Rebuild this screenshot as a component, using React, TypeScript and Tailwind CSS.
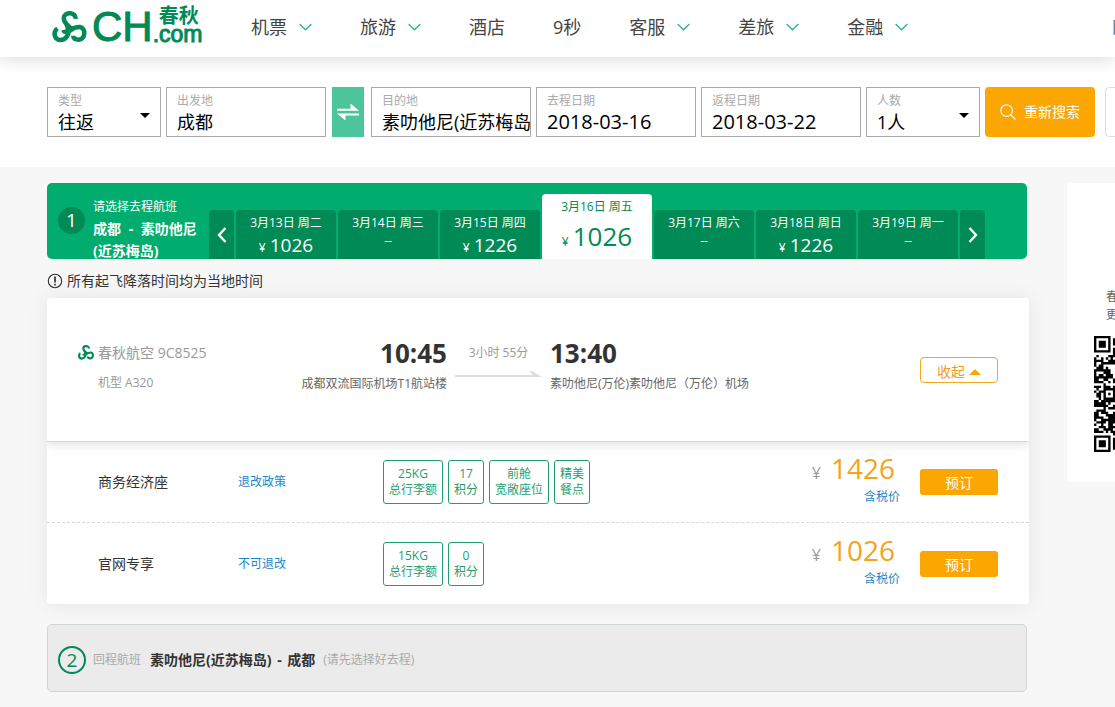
// src/App.tsx
import type { ReactNode } from "react";

type NavItem = { label: string; menu: boolean };
type DayTab = { date: string; price?: string; active?: boolean };
type Fare = { name: string; policy: string; tags: string[][]; price: string };

const NAV: NavItem[] = [
  { label: "机票", menu: true },
  { label: "旅游", menu: true },
  { label: "酒店", menu: false },
  { label: "9秒", menu: false },
  { label: "客服", menu: true },
  { label: "差旅", menu: true },
  { label: "金融", menu: true },
];

const DAYS: DayTab[] = [
  { date: "3月13日 周二", price: "1026" },
  { date: "3月14日 周三" },
  { date: "3月15日 周四", price: "1226" },
  { date: "3月16日 周五", price: "1026", active: true },
  { date: "3月17日 周六" },
  { date: "3月18日 周日", price: "1226" },
  { date: "3月19日 周一" },
];

const FARES: Fare[] = [
  {
    name: "商务经济座",
    policy: "退改政策",
    tags: [
      ["25KG", "总行李额"],
      ["17", "积分"],
      ["前舱", "宽敞座位"],
      ["精美", "餐点"],
    ],
    price: "1426",
  },
  {
    name: "官网专享",
    policy: "不可退改",
    tags: [
      ["15KG", "总行李额"],
      ["0", "积分"],
    ],
    price: "1026",
  },
];

function SpringMark({ className }: { className: string }) {
  return (
    <svg viewBox="0 0 105 98" className={className} fill="none" stroke="#008a55" strokeWidth="14" aria-hidden="true">
      {/* top, right and left lobes */}
      <path d="M71 24 C73 2 36 1 35 22 C35 38 49 38 48 54 C47 66 36 66 34 58" />
      <path d="M48 50 C54 60 70 48 84 49 C104 52 101 86 82 88 C70 88 64 84 64 76" />
      <path d="M50 52 C52 72 42 89 24 89 C4 87 2 62 16 54" />
      <path d="M34 34 L52 38 L70 58 L48 72 Z" fill="#008a55" stroke="none" />
    </svg>
  );
}

function Logo() {
  return (
    <a href="#" className="flex items-center text-[#008a55]">
      <SpringMark className="h-8 w-[35px]" />
      <span className="ml-[5px] font-['Liberation_Sans'] text-[42px] leading-[42px] [-webkit-text-stroke:1px]">CH</span>
      <span className="flex flex-col pb-1">
        <span className="pl-1.5 text-[20px] leading-[18px] font-bold">春秋</span>
        <span className="font-['Liberation_Sans'] text-[23px] leading-[18px] [-webkit-text-stroke:1px]">.com</span>
      </span>
    </a>
  );
}

function Chevron() {
  return (
    <svg viewBox="0 0 14 8" className="h-2 w-[13px]" fill="none" stroke="#2bb585" strokeWidth="1.4" aria-hidden="true">
      <path d="M0.7 0.7 L7 7 L13.3 0.7" />
    </svg>
  );
}

function Field({
  id,
  label,
  className,
  children,
}: {
  id: string;
  label: string;
  className: string;
  children: ReactNode;
}) {
  return (
    <div className={`relative h-[50px] shrink-0 overflow-hidden border border-[#aaa] bg-white pl-2.5 ${className}`}>
      <label htmlFor={id} className="block pt-1 text-xs leading-[18px] text-[#aaa]">
        {label}
      </label>
      {children}
    </div>
  );
}

function SelectField({ id, label, value }: { id: string; label: string; value: string }) {
  return (
    <Field id={id} label={label} className="w-[114px]">
      <select
        id={id}
        defaultValue={value}
        className="block h-6 w-full appearance-none bg-transparent text-lg leading-6 text-black outline-none"
      >
        <option>{value}</option>
      </select>
      <svg viewBox="0 0 10 5" className="pointer-events-none absolute top-[25px] right-2.5 h-[5px] w-2.5" aria-hidden="true">
        <path d="M0 0 H10 L5 5 Z" />
      </svg>
    </Field>
  );
}

function TextField({ id, label, value, size }: { id: string; label: string; value: string; size: string }) {
  return (
    <Field id={id} label={label} className="w-[160px]">
      <input
        id={id}
        type="text"
        defaultValue={value}
        className={`block h-6 w-full bg-transparent leading-6 text-black outline-none ${size}`}
      />
    </Field>
  );
}

function ArrowTab({ label, d }: { label: string; d: string }) {
  return (
    <button
      type="button"
      aria-label={label}
      className="flex h-[49px] w-[25px] shrink-0 items-center justify-center rounded-t bg-[#008a55]"
    >
      <svg viewBox="0 0 10 16" className="h-4 w-2.5" fill="none" stroke="#fff" strokeWidth="2.4" aria-hidden="true">
        <path d={d} />
      </svg>
    </button>
  );
}

function Day({ day }: { day: DayTab }) {
  if (day.active) {
    return (
      <button type="button" className="h-[65px] w-[110px] shrink-0 rounded-t bg-white text-[#008a55]">
        <span className="block text-xs leading-[26px]">{day.date}</span>
        <span className="flex h-[39px] items-baseline justify-center gap-1">
          <span className="text-xs">¥</span>
          <span className="text-[26px] leading-[32px]">{day.price}</span>
        </span>
      </button>
    );
  }
  return (
    <button type="button" className="h-[49px] w-[100px] shrink-0 rounded-t bg-[#008a55] text-white">
      <span className="block text-xs leading-[26px]">{day.date}</span>
      {day.price ? (
        <span className="flex h-[23px] items-baseline justify-center gap-1">
          <span className="text-xs">¥</span>
          <span className="text-[19px] leading-[18px]">{day.price}</span>
        </span>
      ) : (
        <span className="block h-[23px] text-xs leading-[10px]">--</span>
      )}
    </button>
  );
}

function FareRow({ fare }: { fare: Fare }) {
  return (
    <li className="flex h-[81px] items-center border-b border-dashed border-[#d8d8d8] pr-[31px] pl-[51px] last:border-b-0">
      <span className="w-[140px] text-sm text-[#333]">{fare.name}</span>
      <a href="#" className="w-[145px] text-xs text-[#1d87c9]">
        {fare.policy}
      </a>
      <div className="flex flex-1 gap-[5px]">
        {fare.tags.map(([top, bottom]) => (
          <span
            key={top}
            className="h-11 rounded-[3px] border border-[#1f9e6e] px-[5px] pt-[5px] text-center text-xs leading-4 text-[#1f9e6e]"
          >
            {top}
            <br />
            {bottom}
          </span>
        ))}
      </div>
      <div className="mr-5 pb-0.5 text-right">
        <div className="flex items-baseline gap-2.5 pr-[5px] text-[28px] leading-[30px] text-[#f5a31a]">
          <span className="text-base text-[#999]">¥</span>
          {fare.price}
        </div>
        <div className="text-xs leading-6 text-[#1d87c9]">含税价</div>
      </div>
      <button type="button" className="h-[26px] w-[78px] rounded-[3px] bg-[#fba601] text-sm leading-[28px] text-white">
        预订
      </button>
    </li>
  );
}

// 49x49 modules, finder and alignment marks first, the rest is filled in
const QR_SIZE = 49;

function ring(x: number, y: number, cx: number, cy: number) {
  return Math.max(Math.abs(x - cx), Math.abs(y - cy));
}

function isDark(x: number, y: number) {
  for (const [cx, cy] of [[3, 3], [45, 3], [3, 45]]) {
    const r = ring(x, y, cx, cy);
    if (r <= 4) return r === 3 || r <= 1;
  }
  for (const cx of [6, 24, 42]) {
    for (const cy of [6, 24, 42]) {
      const r = ring(x, y, cx, cy);
      if (r <= 2 && !(cx !== 24 && cy !== 24 && cx + cy !== 84)) return r !== 1;
    }
  }
  const n = Math.sin(x * 12.9898 + y * 78.233) * 43758.5453;
  return n - Math.floor(n) > 0.44;
}

function QrCode() {
  let d = "";
  for (let y = 0; y < QR_SIZE; y++) {
    for (let x = 0; x < QR_SIZE; x++) {
      if (isDark(x, y)) d += `M${x} ${y}h1v1h-1z`;
    }
  }
  return (
    <svg viewBox="0 0 49 49" className="size-[116px]" role="img" aria-label="二维码">
      <path d={d} />
    </svg>
  );
}

export default function App() {
  return (
    <div className="min-h-screen overflow-x-hidden bg-[#f7f7f7] font-['Open_Sans','Noto_Sans_CJK_SC',sans-serif] text-[#333]">
      {/* HEADER */}
      <header className="relative z-10 flex h-[57px] items-center bg-white pl-[52px] whitespace-nowrap shadow-[0_2px_16px_rgba(0,0,0,0.15)]">
        <div className="w-[199px] shrink-0 pb-1">
          <Logo />
        </div>
        <nav className="flex shrink-0 gap-12 pb-1 text-lg text-[#444]">
          {NAV.map((item) => (
            <a key={item.label} href="#" className="flex items-center gap-3">
              {item.label}
              {item.menu && <Chevron />}
            </a>
          ))}
        </nav>
        <a href="#" className="ml-[204px] shrink-0 pb-1 text-base text-[#666]">
          国际
        </a>
      </header>

      {/* SEARCH */}
      <form className="flex h-[110px] gap-[5px] bg-white pt-[30px] pl-[47px]" onSubmit={(e) => e.preventDefault()}>
        <SelectField id="type" label="类型" value="往返" />
        <TextField id="from" label="出发地" value="成都" size="text-lg" />
        <button type="button" aria-label="交换" className="mr-0.5 ml-px flex h-[50px] w-8 shrink-0 items-center justify-center bg-[#4dc59a]">
          <svg viewBox="0 0 24 18" className="h-[18px] w-6" fill="#fff" aria-hidden="true">
            <path d="M1 7.8 V5.8 H14.5 V0.5 L23 7.8 Z" />
            <path d="M23 10.6 V12.4 H9.5 V17.5 L1 10.6 Z" />
          </svg>
        </button>
        <TextField id="to" label="目的地" value="素叻他尼(近苏梅岛)" size="text-lg" />
        <TextField id="depart" label="去程日期" value="2018-03-16" size="text-xl" />
        <TextField id="return" label="返程日期" value="2018-03-22" size="text-xl" />
        <SelectField id="people" label="人数" value="1人" />
        <button
          type="submit"
          className="flex h-[50px] w-[110px] shrink-0 items-center justify-center gap-2 rounded bg-[#fba601] text-sm text-white"
        >
          <svg viewBox="0 0 16 16" className="size-4" fill="none" stroke="#fff" strokeWidth="1.1" aria-hidden="true">
            <circle cx="6.6" cy="6.6" r="5.8" />
            <path d="M10.8 10.8 L15.5 15.5" />
          </svg>
          重新搜索
        </button>
        <button type="button" aria-label="更多" className="ml-[5px] h-[50px] w-[110px] shrink-0 rounded border border-[#ddd]" />
      </form>

      <div className="flex min-w-[1284px] items-start gap-[38px] px-[47px] pt-4">
        <main className="max-w-[982px] flex-1">
          {/* OUTBOUND DAYS */}
          <section className="mr-0.5 flex h-[76px] overflow-hidden rounded-[5px] bg-[#00ac6e] pl-[11px] text-white">
            <span className="mt-6 flex size-[27px] shrink-0 items-center justify-center rounded-full bg-[#008a55] text-[19px] leading-[27px]">
              1
            </span>
            <div className="ml-2 w-[116px] shrink-0 pt-[13px]">
              <p className="text-xs leading-[22px]">请选择去程航班</p>
              <h2 className="text-sm leading-[22px] font-bold">
                成都<span className="mx-1"> - </span>素叻他尼
                <br />
                (近苏梅岛)
              </h2>
            </div>
            <div className="flex items-end gap-0.5">
              <ArrowTab label="前一天" d="M8.5 1 L2 8 L8.5 15" />
              {DAYS.map((day) => (
                <Day key={day.date} day={day} />
              ))}
              <ArrowTab label="后一天" d="M1.5 1 L8 8 L1.5 15" />
            </div>
          </section>

          <p className="flex h-[39px] items-center gap-1 pt-1 text-sm">
            <svg viewBox="0 0 16 16" className="size-4" fill="none" stroke="#333" aria-hidden="true">
              <circle cx="8" cy="8" r="6.7" strokeWidth="1.1" />
              <path d="M8 3.6 V9.4 M8 10.8 V12.4" strokeWidth="1.7" />
            </svg>
            所有起飞降落时间均为当地时间
          </p>

          {/* FLIGHT */}
          <article className="overflow-hidden rounded-[3px] bg-white shadow-[0_0_20px_rgba(60,70,90,0.1)]">
            <div className="flex h-36 items-center border-b border-[#d8d8d8] px-[31px] shadow-[0_2px_10px_rgba(0,0,0,0.14)]">
              <div className="w-[202px] pb-1 text-[#999]">
                <p className="flex items-center gap-1 text-sm leading-[30px]">
                  <SpringMark className="h-[15px] w-4" />
                  春秋航空 9C8525
                </p>
                <p className="pl-5 text-xs leading-[30px]">机型 A320</p>
              </div>
              <div className="w-[167px] text-right">
                <p className="text-[26px] leading-[28px] font-bold">10:45</p>
                <p className="text-xs leading-[34px] text-[#666]">成都双流国际机场T1航站楼</p>
              </div>
              <div className="mx-2 w-[87px] pb-1 text-center text-xs text-[#999]">
                <p className="leading-[28px]">3小时 55分</p>
                <svg viewBox="0 0 87 30" className="h-[30px] w-[87px]" aria-hidden="true">
                  <path d="M0 8 H78 L74 4 H77 L87 10 H0 Z" fill="#dcdcdc" />
                </svg>
              </div>
              <div className="flex-1">
                <p className="text-[26px] leading-[28px] font-bold">13:40</p>
                <p className="text-xs leading-[34px] text-[#666]">素叻他尼(万伦)素叻他尼（万伦）机场</p>
              </div>
              <button
                type="button"
                className="flex h-[26px] w-[78px] items-center justify-center gap-1 rounded border border-[#f3a71c] pt-1 text-sm text-[#f39b1c]"
              >
                收起
                <svg viewBox="0 0 12 6" className="h-1.5 w-3" fill="#fba601" aria-hidden="true">
                  <path d="M0 6 L6 0 L12 6 Z" />
                </svg>
              </button>
            </div>
            <ul>
              {FARES.map((fare) => (
                <FareRow key={fare.name} fare={fare} />
              ))}
            </ul>
          </article>

          {/* RETURN */}
          <section className="mt-5 mr-0.5 flex h-[68px] items-center rounded-[5px] border border-[#d0d6d4] bg-[#ebebeb] pt-1 pl-2.5">
            <span className="flex size-7 items-center justify-center rounded-full border-2 border-[#008a55] text-[19px] leading-6 text-[#008a55]">
              2
            </span>
            <span className="ml-[7px] text-xs text-[#aaa]">回程航班</span>
            <h2 className="ml-[9px] text-sm font-bold">
              素叻他尼(近苏梅岛)<span className="mx-0.5"> - </span>成都
            </h2>
            <span className="ml-2 text-xs text-[#aaa]">(请先选择好去程)</span>
          </section>
        </main>

        {/* APP DOWNLOAD */}
        <aside className="h-[299px] w-[170px] shrink-0 rounded bg-white px-[27px] pt-[105px]">
          <p className="mb-3 pl-3 text-xs leading-[18px] text-[#666]">
            春秋航空
            <br />
            更多优惠
          </p>
          <QrCode />
        </aside>
      </div>
    </div>
  );
}
